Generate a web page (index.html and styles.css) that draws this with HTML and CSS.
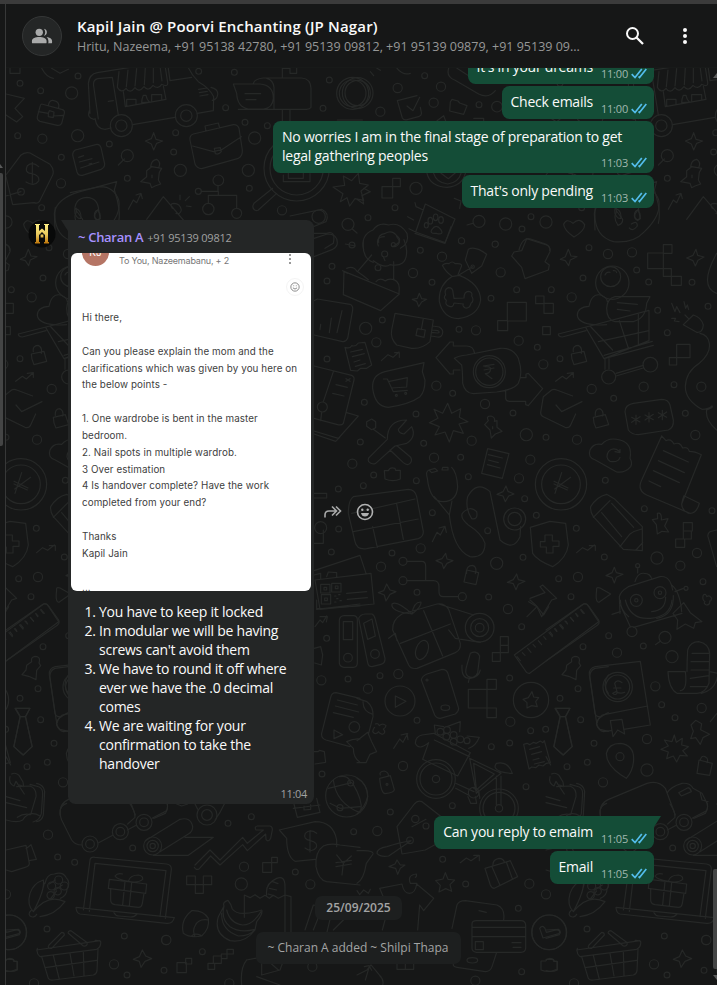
FILE: index.html
```html
<!DOCTYPE html>
<html lang="en">
<head>
<meta charset="utf-8">
<title>Kapil Jain @ Poorvi Enchanting (JP Nagar)</title>
<link rel="stylesheet" href="styles.css">
</head>
<body>
<svg class="defs" width="0" height="0" aria-hidden="true">
  <symbol id="ticks" viewBox="0 0 16 11"><path d="M.7 6.200 4 9.500 10.800 1M7.500 8.500 8.500 9.500 15.300 1" fill="none" stroke="#53bdeb" stroke-width="1.700"/></symbol>
</svg>
<div class="app">
  <aside class="rail"><i class="rail-arrow"></i><i class="rail-thumb"></i></aside>
  <main class="panel">
    <header class="header">
      <div class="group-avatar">
        <svg width="22" height="22" viewBox="0 0 24 24" fill="#a9aaaa"><circle cx="9" cy="8" r="4"/><path d="M1 19v-1.600c0-3 4-4.400 8-4.400s8 1.400 8 4.400V19q0 1-1 1H2q-1 0-1-1zM14.200 4.100a4 4 0 0 1 0 7.800q2.600-3.900 0-7.800zM17 13.200c3.500.5 6 1.800 6 4.200V19q0 1-1 1h-3.500q.5-.5.500-1v-1.600q0-2.600-2-4.200z"/></svg>
      </div>
      <div class="heading">
        <h1 class="title">Kapil Jain @ Poorvi Enchanting (JP Nagar)</h1>
        <p class="members">Hritu, Nazeema, +91 95138 42780, +91 95139 09812, +91 95139 09879, +91 95139 09...</p>
      </div>
      <div class="tools">
        <svg width="24" height="24" viewBox="0 0 24 24" fill="none" stroke="#fafafa" stroke-width="2"><circle cx="9.500" cy="9.500" r="5.500"/><path d="m13.500 13.500 6.500 6.500" stroke-width="2.300"/></svg>
        <svg width="24" height="24" viewBox="0 0 24 24" fill="#fafafa"><circle cx="12" cy="6" r="2"/><circle cx="12" cy="12" r="2"/><circle cx="12" cy="18" r="2"/></svg>
      </div>
    </header>
    <section class="chat">
      <svg class="wallpaper" width="711" height="917" viewBox="6 68 711 917" aria-hidden="true">
        <defs>
          <g id="doodles" transform="scale(.33333)">
            <defs>
              <g id="small">
                <path d="M60 250h0M122 272h0M234 228h0M596 214h0M703 217h0M677 323h0M988 240h0M969 325h0M53 407h0M328 432h0M527 398h0M521 456h0M184 472h0M382 535h0M125 623h0M748 565h0M735 367h0M802 377h0"/>
                <path transform="translate(1071)" d="M203 227h0M366 314h0M33 653h0M114 623h0M495 687h0M522 650h0M313 722h0M414 733h0"/>
                <path transform="translate(900 690)" d="M156 45h0M361 61h0M485 33h0M586 42h0M96 109h0M81 153h0M234 113h0M396 157h0M573 205h0M650 179h0M754 179h0M849 144h0M867 53h0M247 270h0M477 298h0M712 352h0M81 387h0M193 517h0M458 490h0M348 552h0M639 549h0M738 622h0M780 386h0M941 505h0M1010 120h0M1046 156h0M1176 157h0M1073 241h0M1102 308h0M1224 229h0M1122 464h0M1156 550h0M916 751h0M1033 836h0M181 636h0M371 640h0M482 682h0M221 735h0M190 767h0M115 777h0M349 752h0M505 740h0M674 806h0M397 848h0M563 902h0M709 856h0M669 982h0M829 895h0M913 981h0M116 897h0M94 966h0M276 969h0M351 1087h0M566 1101h0M776 1046h0M813 1100h0M1236 842h0M1209 1055h0"/>
                <path transform="translate(0 1800)" d="M129 140h0M60 295h0M114 266h0M122 359h0M162 430h0M142 487h0M81 500h0M980 115h0M1044 237h0M966 522h0M684 670h0M754 650h0M398 744h0M173 771h0M224 787h0M141 987h0M373 1008h0M492 1111h0M607 1055h0M886 816h0M1061 695h0M381 1125h0"/>
                <path transform="translate(1071 1800)" d="M494 80h0M755 107h0M859 138h0M69 227h0M458 234h0M180 361h0M521 392h0M566 388h0M458 429h0M403 440h0M507 560h0M286 617h0M100 636h0M954 353h0M914 314h0M257 778h0M326 852h0M484 925h0M494 1115h0"/>
              </g>
              <g id="medium">
                <path d="M127 416h0M183 550h0M846 631h0"/>
                <path transform="translate(1071)" d="M122 264h0M252 260h0M230 308h0M70 335h0"/>
                <path transform="translate(900 690)" d="M339 129h0M426 80h0M602 127h0M815 202h0M924 72h0M996 67h0M528 301h0M656 332h0M730 403h0M229 337h0M409 467h0M555 522h0M515 632h0M402 683h0M657 745h0M831 629h0M875 477h0M1031 470h0M1204 470h0M1186 615h0M691 689h0M157 701h0M362 955h0M243 1010h0M834 1041h0M1141 1007h0M1191 969h0"/>
                <path transform="translate(0 1800)" d="M189 547h0M144 704h0M499 1020h0M342 1093h0M732 800h0M931 853h0M964 241h0M937 1100h0M688 1150h0M102 1150h0"/>
                <path transform="translate(1071 1800)" d="M453 27h0M124 222h0M33 266h0M780 158h0M895 259h0M460 365h0M870 417h0M1034 324h0M138 498h0M61 693h0M517 851h0M567 883h0M355 1142h0M1047 1020h0"/>
              </g>
              <g id="large">
                <path d="M215 279h0M233 407h0M541 511h0M745 511h0M764 414h0M1248 565h0M1638 666h0M1517 672h0M1097 985h0M1579 1304h0M1490 1690h0M1971 1674h0M724 2652h0M2016 1970h0M1941 2310h0"/>
              </g>
            </defs>
            <use href="#small" class="ring r-small"/><use href="#small" class="core c-small"/>
            <use href="#medium" class="ring r-medium"/><use href="#medium" class="core c-medium"/>
            <use href="#large" class="ring r-large"/><use href="#large" class="core c-large"/>

            <!-- van, mailbox, briefcases, tag, magnifier -->
            <g class="line">
              <path d="M270 340 265 250Q268 222 292 218L560 175M285 355Q290 388 315 388L333 384M398 374 525 352M592 340 640 332 641 290Q630 265 595 245 575 225 565 203M505 205 510 242 575 232M355 345 337 232 293 236Q278 240 281 258L295 357M268 332q-8 22 14 26M633 262q22 5 20 22-2 15-16 17M325 304l15-2M596 268l25-4M598 278l24-4M600 288l24-4M370 275 376 320 498 298 490 258M380 318v-20h28v16M425 308q0-10 5-22h8q2 12 10 20zM455 302v-18h30v14"/>
              <circle cx="364" cy="377" r="33"/><circle cx="364" cy="377" r="17"/><circle cx="559" cy="347" r="33"/><circle cx="559" cy="347" r="17"/>
              <path d="M357 215 352 262q12 20 26 3 12 18 27-2 12 16 27-3 13 16 27-4 15 14 26-3 20 10 18-6L495 196M384 210l-5 50M410 206l-5 52M436 202l-3 52M460 198v50M480 198l6 45"/>
              <path d="M700 252H780Q820 255 820 295 818 325 790 327H745Q712 322 710 280ZM760 250Q765 236 790 234H905Q932 236 933 265V322Q930 328 920 328H715M735 281h47M738 299h30M822 328V262Q820 240 800 235M847 328V390M870 328V390M847 234V205H870V220H890V205"/>
              <circle cx="1058" cy="280" r="48"/><circle cx="1058" cy="280" r="40"/>
              <path d="M18 282 73 295 45 325 68 350 50 366 18 345M30 205V220H60V205M125 205q15 28 35 30M155 205l25 15 25-12"/>
              <path d="M125 312 185 328Q195 330 193 340L185 370Q180 378 172 376L120 364Q110 360 112 350L120 320Q122 312 125 312M145 316q3-18 17-14 18 4 14 22M115 335l30 5 3-8 14 4-1 12 28-2M145 340v10l15 3v-6"/>
              <path d="M580 402 700 374Q712 373 717 385L727 450Q728 468 715 475L605 506Q590 505 585 492L570 420Q568 406 580 402M618 393l-3-15 40-9 4 15M578 438 640 455 667 448 724 410M643 445l18-2 3 12q-8 10-18 6z"/>
              <path d="M226 450 290 433Q300 432 303 443L314 492Q314 503 303 508L247 526Q235 528 231 516L218 465Q218 454 226 450M236 472l15-5M238 486l38-10M242 504l55-18M267 492l8-2"/>
              <path d="M90 459 150 493Q164 508 158 525L118 605Q112 612 102 608L38 614 18 530M18 525 62 466Q75 455 90 459M63 575 18 588M116 500q-18-16-34-3-10 22 14 24 24 5 20 22-12 18-38 3M97 487v62M461 398l7 20 20 5-18 7-9 20-7-18-18-9 18-7zM355 495l18-18"/><circle cx="382" cy="467" r="18"/><circle cx="63" cy="575" r="10"/>
              <path d="M455 500 485 505 478 517 475 540 482 552 465 558 455 563 450 550 422 545 440 530V512zM452 500q2-20 18-22 14 8 6 26M456 525v8M385 628l15-28 10 8 12-25M408 585l15-5 4 16"/>
              <path d="M350 545 240 575Q170 595 163 640L165 690M350 545 343 570Q365 635 355 670M225 640q-5-45 35-48 35 2 36 40l5 24q-14 8-18-8 0-20 14-16M225 625q20 5 18 30-12 2-18-15M440 658 490 590 550 660M517 625q-10-14 5-15 18 0 22 20-3 15-16 10M540 585v14M568 590l-12 12M573 620l-14-2"/>
              <circle cx="655" cy="541" r="16"/><circle cx="625" cy="627" r="17"/><circle cx="710" cy="640" r="15"/><circle cx="595" cy="574" r="9"/>
              <path d="M604 574h50v-17M655 574v12H625v24M655 586H710v38M762 610 818 565M775 630 830 580M762 610q-8 12 2 20 8 4 14-2"/>
              <circle cx="890" cy="505" r="98"/><circle cx="890" cy="505" r="80"/><path d="M850 525v20h80v-24M865 520v15h45v-15M1012 360h75M1021 605l8-24-30-20 35-5-4-28 25 14 20-22 4 30 26 5-22 18 8 28-26-5-16 22-8-25z"/>
              <path d="M870 648 965 628Q990 640 978 665L915 690M850 700h130q28-10 20 30L975 745"/><circle cx="956" cy="650" r="20"/><circle cx="1044" cy="673" r="18"/><path d="m1057 687 14 12M1036 732l30 6"/>
            </g>

            <!-- upper right: check note, folder, paw card, heart, headset -->
            <g class="line" transform="translate(1071)">
              <path d="M275 205q-8 25 18 35L365 282q30 15 50-10M300 205l70 45q30-10 22-35M40 215l10 12M60 205l10 6M120 205q18 22 40 15M121 302 180 287M121 302l15 52q5 8 15 5l36-10q8-4 6-12l-3-15M150 318l18 14 20-40M280 306l5-8 18 5 5 6 22 8-10 26-42-10z"/><circle cx="2" cy="279" r="38"/><circle cx="2" cy="279" r="46"/>
              <circle cx="420" cy="320" r="16"/><path d="M350 355h30v10M240 362l20-15 6 16"/>
              <path d="M210 520q10 40 60 42 45-4 55-42M230 520q8 28 42 32 32-4 40-32M252 520l22 16 24-20M75 560h32v34H75zM107 535h23v25h-23zM20 565l20 10-25 12 5 25-20-14"/>
              <path d="M205 612 294 657 264 728 176 696zM176 696l-20-10M199 630l-22-10-3-12M152 650l18 10"/><ellipse cx="220" cy="662" rx="7" ry="10"/><ellipse cx="236" cy="652" rx="7" ry="10"/><ellipse cx="252" cy="660" rx="7" ry="10"/><ellipse cx="208" cy="676" rx="6" ry="8"/><path d="M225 688q12-18 26 0 12 18-13 12-22 2-13-12"/>
              <circle cx="366" cy="664" r="18"/><path d="m330 675 17-5M651 711q-30-20-31-38 8-20 28-3 20-20 35 4 0 18-32 37M292 595l20 8-4 22M486 750q10-40 35-33l45 15q15 8 12 20M715 622q-10 85 55 103 60 5 90-28Q915 645 905 600 890 560 850 560L760 578M778 624v12q-10 20 5 40 15-5 14-18l-16-22M842 630q16 20 0 32-18-10 0-32M823 672q18-12 18 6-14 18-24 6"/>
              <path d="M20 750Q10 705 48 690 65 665 95 675 128 665 150 700 158 730 130 745M65 728q-5-25 20-28 20-12 35 8 20 15-10 30"/>
            </g>

            <!-- middle field -->
            <g class="line" transform="translate(900 690)">
              <path d="M42 25 82 12Q112 12 112 38 112 50 98 58L42 80M190 35q-5 50 30 62M220 92q35 25 50 12 50 10 50-40 0-15-8-35M250 80l5 12M345 10l90 30 18-50M235 48q-10-28 18-28M290 20q18 20-5 30"/>
              <circle cx="254" cy="72" r="9"/><circle cx="280" cy="44" r="6"/>
              <path d="M132 124 130 194 242 242 298 192zM128 122l14 8M140 115q20-8 30 8l20 14 15 12M228 155q12-14 28-2 8-8 26-4 20 8 15 40M175 122 215 75M281 95v55"/>
              <path d="M358 190 365 206 380 208 365 216 356 230 350 214 337 208 352 205zM805 58l8 20 18 2-20 10-5 17-10-15-15-4 15-8zM1188 58l5 18 19 5-18 10-8 17-7-16-19-8 19-8z"/>
              <path d="M52 207 150 223Q160 228 158 240L143 325Q138 336 128 335L42 315M42 212l10-5M62 283l-2 16M94 264 88 308M126 242l-15 66"/>
              <path d="M285 250 400 270 390 335Q365 358 335 355L290 345Q270 325 275 300ZM398 288l20 3q12 8 10 18-2 14-16 12l-18-3M396 300l18 2q8 6-2 7l-18-2M370 265l-6 34M352 296l24 4-4 22-24-6z"/>
              <path d="M455 140Q415 165 418 215 430 265 475 266 535 258 542 210 540 160 478 136ZM455 138q-18-12-28-32 8-8 20-5 10-10 18 0 20-2 20 6-6 14-12 30M478 134 518 110M496 90 505 58q20-12 55 15l-15 35-30 22Z"/>
              <circle cx="518" cy="110" r="5"/>
              <path d="M462 205 492 204q0-20 14-20 13 2 9 14 9 14-2 22-4 16-17 14-10-6-6-12l-28-3q-2 14-14 10-14-3-9-18-11-8-2-16-6-16 8-22 14 0 14 14z"/>
              <path d="M680 26 740 45Q752 50 750 65L735 95 748 105 745 120 675 146 665 112 635 78 642 66 665 62zM622 217h57v56h-57zM593 272h30v30h-30zM707 198h25v23h-25zM732 220h28v30h-28zM728 290h23v24h-23zM1043 69h47v47h-47zM1090 44h26v26h-26zM1090 116h24v23h-24zM1114 139h30v27h-30zM1130 343h40v40h-40zM1108 383h22v22h-22z"/>
              <path d="M135 352q15 5 20-5 12 4 20-8l20-2 20 68-15 10-18 0-10 8-20-2zM152 366l35-8M157 380l36-9M162 396l18-6M166 409l30-8M244 392l20-18 15 8 18-16M284 368h14v14"/>
              <path d="M372 398 255 425Q215 435 218 475 225 530 265 532 330 522 360 500 375 485 375 450L367 425ZM250 447h12l18 38 42-4M265 455l57-12-2 28-45 3"/><circle cx="289" cy="496" r="3"/><circle cx="317" cy="490" r="3"/>
              <path d="M523 368Q520 348 500 348H460V336H450L408 383 450 432H460V420H480M463 385Q475 378 500 375L600 355Q640 352 655 385 670 430 655 460 640 480 590 486L520 491Q495 490 488 460 488 425 485 405ZM617 480V505Q618 514 630 514H677V524L685 527 728 476 685 430 678 432V443H662"/>
              <circle cx="568" cy="425" r="48"/><circle cx="568" cy="425" r="41"/><path d="M550 408l32-5M552 420l30-6M555 410q18-2 17 8-2 12-16 13l20 15"/>
              <path d="M42 408 155 436Q164 440 162 450L130 580Q125 588 110 583L42 565M100 425 70 515M65 547l-3 25M42 603 115 625 175 558 140 548M42 612l65 22 12-12M108 464l34 8M98 490l34 8M138 446l12 8M150 446l-12 8"/><circle cx="67" cy="531" r="15"/>
              <path d="M443 520 455 550 482 536 478 562 504 575 477 582 490 610 460 602 448 636 435 606 405 615 418 590 388 578 414 565 402 538 428 550z"/>
              <path d="M200 575l15-8 12 8v18l-12 6-15-10zM220 598 256 624M210 680 262 628Q262 570 320 570L295 598Q295 610 312 612L335 590Q350 620 320 640L285 648 227 700Q215 705 206 695 202 685 210 680M270 660l40 38q12 10 20 2 8-8 2-18L292 648"/>
              <path d="M565 572q-8-14 8-14 14 4 10 16l8-2v20l15 12-20 8-12 12-4-24-16-16zM578 590v6M730 500 755 480Q762 476 770 480L818 498M768 525 785 545 846 515M730 500 722 548Q722 556 730 560L795 592Q808 595 812 585L827 552M820 365q-3-18 14-19 14 6 10 24M814 372l38-8 8 30-38 10q-8-16-8-32M886 556q-2-20 14-20 12 6 8 22M880 562l36-8 10 30-38 10q-8-14-8-32M767 454l20-15 12 8 20-18M802 430l18-2v14"/>
              <circle cx="937" cy="158" r="50"/><circle cx="932" cy="140" r="30"/><path d="M915 135q5-10 15-8M940 122q8-2 10 6M920 284q-20 2-40 0-45-5-48-28 0-25 35-27 8-40 35-34 20 8 20 20M1050 200H945Q922 205 920 235 920 270 945 275H1000Q1038 265 1040 220ZM952 218l60 5M952 238l38 5"/>
              <path d="M775 312 870 288 1047 241V332L912 386 858 294M775 312q0 8 12 9L858 302M870 288l68 72M912 386l148-40M912 376l145-42M895 335 1047 302M958 272l28 85M1015 250v96M915 386v32M927 386v30M948 430l82-24M948 438l82-24"/><circle cx="926" cy="441" r="21"/><circle cx="1051" cy="404" r="22"/>
              <path d="M1115 220l10 25 5-15 10 18M1152 215l5 20 5-10 4 14M1115 265h12l-4 8 14 2M1150 284l30-29q25 8 30 30-2 24-20 22zM1155 255l10 10M1200 310q25 5 28 30 5 30-30 60-40 25-42 70 0 40 50 68 20 0 30-10 5 5-16 12Q1215 570 1250 600M1250 70Q1195 170 1250 190"/>
              <path d="M1000 520 1085 508Q1105 508 1110 525L1120 570Q1122 592 1105 600L1015 614Q995 614 985 600L975 545Q975 525 1000 520M1008 555v28M995 562l25 14M1020 560l-25 17M1047 548v28M1035 555l25 14M1060 553l-25 17M1087 541v28M1075 548l25 14M1100 546l-25 17"/>
              <path d="M886 690Q862 682 870 660 880 638 905 643 925 620 960 630 998 640 990 685 998 700 992 710 975 730 950 726ZM958 664q-18-14-32 0-12 18 4 30 24 5 30-12M945 665l15 3v-10"/>
              <path d="M1085 618 1098 632q14-8 24 10 18-8 26 12 16-5 20 10 16 0 36 10L1145 822M1085 618 1025 750Q1010 780 1040 795L1170 850Q1190 850 1198 820L1152 797Q1148 805 1145 822 1145 840 1165 850M1090 662l75 34M1075 692l78 36M1060 722l78 36M1047 753l35 17"/>
              <circle cx="783" cy="763" r="77"/><circle cx="783" cy="763" r="58"/><path d="m765 790 20-62M762 762l40 18M762 754l42 20M812 742l-48 35"/>
              <path d="M563 656l64 15-20 74-62-15zM565 674l42 10M565 690l30 8M562 704l38 10M618 768l6 16 18 8-16 6-10 17-7-17-18-5 18-8z"/>
              <path d="M253 722h12q5-12 20-7l2 6h14v26q-22 10-46 0zM160 800 325 778Q345 778 350 800L370 905Q370 920 355 926L200 956Q170 960 165 935L145 850Q145 810 160 800M155 850l190-43M160 905l195-38M218 890l14 62M290 822l20 106"/>
              <path d="M390 720Q375 720 382 745 390 815 430 815 470 815 473 770 470 725 455 712M387 720l18-5 8 8-18 5zM428 712h16v8h-18zM403 800l45 55 8-42M448 855Q460 960 510 980 555 985 555 940 545 910 505 885 480 865 487 850 510 825 530 845 535 870 515 866 495 835 503 800 530 750 570 785 595 905 600 930 640 965 660 920L662 890"/><circle cx="644" cy="867" r="33"/><circle cx="644" cy="867" r="20"/>
              <path d="M750 874 797 880 805 945Q800 985 758 1010 710 990 698 970L691 892ZM735 915h22v18h20v16h-18v20h-20v-18h-18v-16h14zM830 968l18-15 15 8 20-16M868 947h18v14M397 935l14-28 10 8 14-26M417 894l18-5 4 18"/>
              <path d="M872 830Q890 800 920 793L945 808 1027 890V962L970 958 880 860Q870 845 872 830M880 862 930 812M905 848l60 72M935 820l66 72M960 950l30-38q14-10 35-15M1008 960l20-22M1072 850q14-4 12 20l20-4-10 22 12 18-20-2-14 8-3-28-12-15 16-3zM1150 878h27v25h-27zM1150 903h24v24h-24zM1127 927h27v25h-27z"/>
              <path d="M42 790h38v14H42M42 940H70V900"/><circle cx="62" cy="893" r="18"/>
              <path d="M42 1022 180 976 198 1030M45 1050 213 1030 222 1122 60 1138zM62 1063h28v26H62zM95 1060h28v26H95zM64 1094h28v28H64zM72 1072h8v8h-8zM106 1068h8v8h-8zM74 1104h8v8h-8zM104 1098h4M116 1094h4M110 1106h4M104 1116h4M120 1112h4M140 1090l60-5M142 1108l60-5M42 1035l20-5v16M80 1040l5-14 25 2v14M260 1062l10 18 18 5-18 8-12 20-5-18-18-7 16-6zM437 970l4 17 18 5-18 8-10 16-5-16-18-8 18-6zM650 1032l5 17 20 5-20 9-7 16-8-18-18-4 18-8zM943 1012l6 16 20 5-20 9-6 17-7-17-18-5 18-9z"/>
              <circle cx="309" cy="994" r="12"/><circle cx="309" cy="1052" r="12"/><circle cx="487" cy="1100" r="12"/><path d="M321 994H365Q377 994 377 1008V1052M321 1052H400Q417 1052 417 1070V1085Q417 1100 430 1100H475M500 1030q-2-24 18-24 14 5 8 25M500 1020l36 8-8 36-36-8zM890 1080q-2-10 10-6l32 18-35 25q-12 0-7-37"/>
              <path d="M690 1105 735 1088 720 1070 728 1065 770 1105 755 1110 725 1160 710 1128 690 1110M1005 1055q8-28 28-25 18 0 23 18M1013 1015v14M960 1150 958 1100Q960 1085 985 1070L1080 1040Q1110 1035 1118 1080M1115 1065q25 20 30 80M1125 1085l25-10M1250 900l-20 5q-8 5-6 15l26 90"/><circle cx="1013" cy="1007" r="6"/><circle cx="1158" cy="1075" r="6"/><circle cx="1009" cy="1111" r="18"/><circle cx="1080" cy="1088" r="18"/><circle cx="1009" cy="1111" r="5"/><circle cx="1080" cy="1088" r="5"/>
              <path d="M1055 1145q42-4 42-44M1070 1165q52-10 50-68M1210 1095q8-5 10 5 10-6 15 5-2 10-6 8 2 12-10 12-10-5-4-10-10-6-5-20"/>
            </g>

            <!-- lower left: tie, notes, laptop, corn, basket, bananas -->
            <g class="line" transform="translate(0 1800)">
              <path d="M18 90 130 12Q140 8 146 18L176 60Q180 70 172 76L18 183M30 96l8 10M46 86l5 8M62 74l8 10M78 64l5 8M92 53l8 10M108 42l5 8M122 30l8 10M95 185q-3-14 10-16 18 0 12 20l5 8-12 14-2 28-22-10-20-5 12-14 2-14z"/>
              <path d="M205 200 165 205Q148 212 150 232L165 340Q168 352 185 350M205 225q-20 30 0 55M205 338q-55 25-25 50l25 6M45 325h45L76 350 97 440 70 465 42 440 60 350zM60 350h16M18 470l14 25"/>
              <path d="M35 522q10-6 22 4l12 20 2 14-12-5M30 530q-5 20 12 28M42 558l6-14 25 38M18 590l42 12M18 608l62 15M18 660q35 10 50 0 20-30 52-12M52 652q20-14 40-8L108 590Q110 565 90 558L50 560M90 553l28 8q10 5 10 20l-4 60q-5 20-25 25M110 550q22 5 24 25l-4 70q-4 18-20 20"/>
              <path d="M200 610Q170 620 185 660L215 720Q225 735 246 735M296 728 338 706M382 690 410 675M456 655 495 635Q505 630 502 610M390 612q15 20 15 40l-22 20M530 612l15 6 18-6M645 660q15-20 28-48M585 612l8 16"/>
              <circle cx="270" cy="732" r="24"/><circle cx="270" cy="732" r="13"/><circle cx="361" cy="695" r="24"/><circle cx="361" cy="695" r="13"/><circle cx="432" cy="667" r="24"/><circle cx="432" cy="667" r="13"/><circle cx="621" cy="645" r="30"/><circle cx="621" cy="645" r="16"/>
              <circle cx="458" cy="738" r="27"/><circle cx="458" cy="738" r="17"/><circle cx="458" cy="738" r="8"/><path d="M436 722 540 658Q572 650 578 680 578 695 565 702L480 755M460 766H565L640 712H555"/>
              <path d="M585 795 630 750 660 780 728 712 742 730 790 690 768 690Q762 680 772 678L810 678Q818 680 817 690L812 715Q805 728 798 718L797 702 742 752 728 734 660 795 632 768 598 806Q588 812 583 802"/>
              <path d="M838 690 945 665Q1000 665 1010 720V740M838 690 860 715Q860 770 885 784L945 778M950 700q-20-14-34 0-8 18 15 22 24 6 18 20-12 18-34 2M930 692v64M970 738Q990 728 1020 735L1080 742M970 738Q945 755 948 800 955 840 980 845L1080 855M1010 765l20 25 24-22M1008 800l46-8M1030 790l-4 35M1008 788l46-7M882 612l10 40 68-15-10-42M880 625l80-10M912 618v12l20-2v-14"/>
              <circle cx="1040" cy="588" r="63"/><path d="M1000 540q8 70 80 98M1018 530q30-5 34 20M1058 550q30 50 25 80M990 610l30 15 60-5M985 565l70-17"/><circle cx="1052" cy="549" r="9"/><circle cx="1020" cy="623" r="9"/>
              <path d="M950 0V26L1080 18M950 28 1080 12M945 80l15-20 8 8 12-20M960 50h22l-3 16M1018 60q2-12 14-13l30 0q10 2 10 12v130q0 12-12 13h-28q-12-2-14-12zM1030 65h28v54h-28zM942 145l20-5 6 25-4 30-20-6"/><circle cx="1044" cy="173" r="13"/>
              <path d="M1080 295 1008 278Q995 278 992 292L965 400Q963 415 978 420L1050 440M1012 300l60 15M1006 318l70 18M1000 338l60 14M1002 390v26l26-12zM1040 425q20-10 40-8M1040 425l20 20q0 30 20 42M942 455h12l5-4 14 4 4 32-32 5"/><circle cx="1063" cy="381" r="16"/>
              <path d="M18 750 78 736 88 790Q88 800 75 802L35 815 18 810M78 746l15-12 16 44-22 4M250 930 270 780Q272 770 285 772L500 792Q515 795 514 808L496 955M268 934 285 790 498 812 480 950M228 924Q230 940 240 942L500 970Q518 972 523 953L228 922M342 938q5 10 15 10l35 3q12 0 18-8"/>
              <path d="M328 838 440 852 437 880 325 865zM332 866V900Q332 912 345 914L415 922Q425 922 427 910L432 880M375 845 368 914M395 848 388 918M385 844Q350 838 345 828 352 818 368 822M385 844Q390 825 415 825 430 828 428 838 415 850 385 844"/>
              <path d="M100 935Q80 915 90 880 100 850 130 840 135 870 100 935M100 935Q145 880 195 905 165 945 120 950M95 930q-12 10-5 18 12 8 20-5M135 850q5-28 28-28 25-8 35 10 15 15 3 35 0 20-20 28M125 880l8-30M148 852l18-12M165 870l22-15M150 898l20-25"/><circle cx="155" cy="858" r="12"/><circle cx="176" cy="840" r="12"/><circle cx="193" cy="858" r="12"/><circle cx="173" cy="874" r="11"/><circle cx="152" cy="886" r="11"/>
              <circle cx="28" cy="997" r="52"/><path d="M18 990 55 988Q65 995 58 1004L18 1015M18 1078h22l4 6h8v26q-16 8-34 2M560 828h26v26h-26zM610 828h25v26h-25zM586 854h24v26h-24zM788 788h27v29h-27zM815 772h17v16h-17zM531 1088h28v30h-28zM557 1075h18v17h-18zM624 1090h20v18h-20zM640 1068h24v22h-24zM664 1062h17v14h-17zM681 1048h19v14h-19zM427 1050l10 18 18 8-20 8-12 18-5-18-18-6 18-8z"/>
              <path d="M575 932Q610 930 625 955 630 985 605 1008 570 1015 550 1000 540 960 575 932M625 960q-30-5-40 18-8 12 0 32M575 1008q8-10 28-2"/>
              <path d="M672 918q-5-12 12-17l8 12 5 14Q715 952 785 930 790 940 770 965L765 990Q735 1030 690 1022 640 1000 655 950ZM672 918q-10 40 18 62 30 20 75 8M680 930q10 40 48 45 30 0 55-40M665 940q-2 50 50 68 35 0 50-20"/>
              <path d="M733 952V885L750 893 765 884 780 895 795 886 808 895 820 886 835 895 855 885 873 890V1000M733 952M800 885Q795 850 830 835 855 825 855 860V1000M805 882l20 6M808 865l22 5M818 845l16 6M740 1080q-20 25-15 75M740 1080l50-10 45 40M770 1130l70 25M785 1075v50l55-15 8-22"/>
              <path d="M110 1050 300 1022M112 1045Q108 1060 120 1070L290 1048Q304 1040 302 1025 298 1020 285 1021M155 1045q-15 2-8-10L185 997q8 0 8 8zM205 1000q-2-8 8-8L262 1028q0 12-12 10zM125 1070 145 1135Q150 1142 160 1140L280 1125Q290 1122 291 1112L294 1048M135 1103l155-22M160 1066l18 72M210 1060l12 68M250 1053l2 74M915 990l25-75 35 5M940 990l22-55 40 10M980 1000l12-50 40 8M1000 990l60-60"/>
            </g>

            <!-- lower right: gifts, bicycle, book, robot, card, basket -->
            <g class="line" transform="translate(1071 1800)">
              <path d="M5 55Q10 43 25 42L45 42Q52 45 55 58L84 175Q85 190 72 193L45 200Q34 200 32 188zM20 70 45 57 55 108 32 118z"/><circle cx="54" cy="162" r="13"/>
              <path d="M135 42 240 12Q262 8 275 28L310 130Q312 150 295 158L180 205Q162 208 155 195L107 90Q105 60 135 42M130 130 280 72M200 32 257 168M165 42Q100 35 105 12 120 0 165 42M165 42Q170 5 192 6 195 20 165 42M245 12 350 45M275 90 295 115 370 127M95 115l20-15 5 22"/><ellipse cx="195" cy="150" rx="18" ry="30" transform="rotate(20 195 150)"/><circle cx="368" cy="83" r="43"/><circle cx="368" cy="83" r="27"/><circle cx="368" cy="83" r="13"/>
              <path d="M340 160q20-10 28 8l-6 50q-10 22-30 10-10-8-3-30zM315 195q-3 42 25 40 25-3 30-25M337 235l-3 12M430 110h24v26h-24zM430 136h24v22h-24zM406 158h24v26h-24zM334 268h56v56h-56zM390 238h28v30h-28zM390 324h28v29h-28z"/>
              <circle cx="129" cy="303" r="45"/><path d="M115 288v34l32-18zM193 240Q195 228 210 222L255 208Q268 208 272 218L305 325Q305 335 295 342L250 355Q238 355 233 345ZM0 295l30 10Q50 320 48 350L35 400M18 305q0 30 30 38M0 422l32-25 12 28 15 30-20 8-12 25H0M55 372q8-4 12 5 10-10 20 0-2 8-8 10 10 12-4 16-10-5-10-8-10 12-18 0 3-12 6-13M110 445l18-28 10 10 14-26M132 405l18-4 3 18"/><circle cx="210" cy="240" r="3"/><ellipse cx="265" cy="323" rx="13" ry="8"/>
              <path d="M175 430q0-20 20-25l35-5 110 58-38 70-105-50 18-50q-30 25-40 2M232 420l105 50M235 400 232 375 260 380M270 380 310 365 308 395M330 408 367 412Q355 440 335 445"/><circle cx="250" cy="395" r="10"/><circle cx="270" cy="390" r="10"/><circle cx="268" cy="410" r="10"/><circle cx="290" cy="405" r="10"/><circle cx="290" cy="425" r="10"/><circle cx="310" cy="418" r="10"/><circle cx="330" cy="422" r="9"/>
              <circle cx="237" cy="537" r="58"/><circle cx="237" cy="537" r="48"/><circle cx="237" cy="537" r="11"/><circle cx="426" cy="625" r="58"/><circle cx="426" cy="625" r="48"/><circle cx="426" cy="625" r="11"/><path d="M338 475 432 520 358 580 338 475M350 490l8 78M350 490l62 32-54 48M296 550l55 25M296 565l38 20M418 528V614M432 528V614M418 490q35-8 48 30-20 0-35-5-25-10-13-25M333 590l8 20h18l-4-20M350 565q20 10 18 30"/><circle cx="350" cy="578" r="16"/>
              <path d="M472 165 680 12Q690 10 695 20L725 65 518 220Q510 222 505 212ZM480 170l10 12M496 158l8 8M512 145l10 12M528 133l7 8M544 122l10 12M560 110l7 8M576 98l10 12M592 86l7 8M608 75l10 12M624 63l7 8M640 52l10 12M656 40l7 8M672 28l10 12"/>
              <path d="M510 50 540 20 515 5M540 20 560 45 575 20M790 0q0 30 25 50M805 0q15 60 75 55 60-5 65-55M830 82l145-42M790 15 820 80M948 40 980 8 1000 38 1035 65 1015 68 1010 85 985 72 960 88 962 60zM765 43l25-8"/><circle cx="825" cy="95" r="15"/><circle cx="924" cy="112" r="18"/><path d="m895 134 16-11"/>
              <path d="M990 215Q990 185 992 150 1000 125 1025 125 1055 130 1058 160L1056 250Q1045 280 1020 280H960Q935 265 933 215H985Q992 270 970 272M1000 235l56-8M1005 160h50M1002 185h54M1002 210h54M1000 260h50M1058 215l25 5q-5 50-50 60"/>
              <circle cx="522" cy="300" r="53"/><path d="M525 275l5 16 15 2-9 12 5 15-17-3-14 7v-16l-12-10 16-5zM596 325h43L626 350 645 440 618 465 590 440 610 350zM610 350h16"/>
              <path d="M697 225Q695 205 715 200L850 184 880 375 800 388M697 225 720 375Q725 392 740 395L762 392M720 370Q725 345 745 343L872 318M760 362 795 358 803 402 782 390 768 410z"/><circle cx="782" cy="261" r="44"/><circle cx="782" cy="261" r="36"/><path d="M795 248q-14-12-22 2l8 28q-5 10-14 2l10-5q14 8 26 2M770 264h22M500 433l10-3 8 4 12-7 8 3 12-7 8 5 4-6 18 66-12 2-10 8-12-3-10 8-12-2-8 6zM518 448l30-8M524 463l30-8M528 480l18-5M532 492l30-7"/>
              <path d="M808 535Q748 500 748 460 755 430 790 430 830 435 830 475Q830 510 808 535"/><circle cx="789" cy="470" r="12"/><path d="M952 405l6 22 18-12-2 20 20 5-17 12 14 16-22-2-10 20-10-18-20 8 5-20-22-8 22-10-12-18 23 5zM1002 375l14-14 18 10-3 18 27 14-20 10-8 20-14-20-15 3 8-22zM1030 480q3-15 14-10 12 6 6 18M1026 480l40 10-8 36-38-6zM1080 340l-20 25"/>
              <path d="M70 525q-5-10 12-12 14 4 12 15M68 535l32-8 12 42q0 8-28 12-12-2-16-46M0 535Q30 550 32 590 25 620 0 642"/><circle cx="90" cy="553" r="3"/>
              <path d="M250 648 195 605Q182 600 172 612L120 680 135 762 205 750 250 725M162 722Q120 730 90 740 60 745 60 760 70 772 95 768ZM165 680l42-22"/><circle cx="175" cy="657" r="11"/><circle cx="207" cy="678" r="9"/><circle cx="159" cy="721" r="10"/>
              <path d="M730 648Q725 610 755 598L870 550Q905 540 925 565L955 645M930 580Q940 560 975 550 1000 548 1008 565L1035 580 1050 610Q1055 625 1045 640L1010 655M965 578l28-15q8 2 10 12l-30 13zM1030 580l5 20 18 5"/>
              <path d="M0 752h20q30 0 28 10L28 790Q20 840 0 850M0 872l8 12 12-14 14 10 6-12M310 788l18-14 14 8 22-15M350 766h17v16M384 805 460 782 482 830 412 865Q404 865 400 855ZM408 797q-2-18 18-22 14 0 16 12M405 800l24 56M448 786l18 50M120 780l10 15 14 0-14 10-8 18-6-18-20-5 18-8zM265 818l8 20 20 2-14 14 5 20-18-8-20 10 4-20-14-14 22-5z"/>
              <path d="M135 852 68 865 85 905M135 852q5 28 22 28 18 0 22-28L230 895 200 932 188 915 182 990M180 850 160 850Q150 825 178 822 180 830 175 832M92 930 76 990M285 985 300 915Q305 902 325 902L420 915Q445 925 440 960M366 932l22 5M290 1090Q285 1100 300 1102L385 1115Q400 1115 405 1100L418 1060M345 972Q345 962 358 962H492Q505 962 506 975V1045Q505 1056 492 1057H358Q345 1055 345 1045ZM345 982h160M345 1010h160M355 1025h24v24h-24zM465 1028h27M468 1042h24M120 1090h50v18H120zM145 1090v18M0 1125l30-15 12-15 25 30q15 15 10 30M25 1140l12-40M22 1100l14-3 8 14"/><ellipse cx="346" cy="1081" rx="16" ry="8"/>
              <circle cx="576" cy="997" r="52"/><path d="M548 985q8-12 16 0l4 12 32-8q12 4 6 12l-48 13zM552 1083h14q8-12 22-5l2 6h10v24q-24 12-48 2z"/>
            </g>
          </g>
        </defs>
        <use href="#doodles" x="-540"/><use href="#doodles"/><use href="#doodles" x="540"/>
      </svg>

      <div class="thread">
        <div class="bubble out"><span class="text">It's in your dreams</span><span class="meta">11:00<svg class="tick"><use href="#ticks"/></svg></span></div>
        <div class="bubble out"><span class="text">Check emails</span><span class="meta">11:00<svg class="tick"><use href="#ticks"/></svg></span></div>
        <div class="bubble out long"><span class="text">No worries I am in the final stage of preparation to get<br>legal gathering peoples</span><span class="meta">11:03<svg class="tick"><use href="#ticks"/></svg></span></div>
        <div class="bubble out"><span class="text">That's only pending</span><span class="meta">11:03<svg class="tick"><use href="#ticks"/></svg></span></div>

        <div class="incoming">
          <svg class="sender-logo" width="28" height="28" viewBox="0 0 28 28">
            <defs><linearGradient id="gold" x2="0" y2="1"><stop stop-color="#fff084"/><stop offset=".55" stop-color="#e9c85c"/><stop offset="1" stop-color="#bd7408"/></linearGradient></defs>
            <circle cx="14" cy="14" r="13.500" fill="#080909"/>
            <path fill="url(#gold)" d="M7 4h5v1h-1v6l3-2.500L17 11V5h-1V4h5v1h-1v17h1v1.500h-5V22h1v-7l-3-3-3 3v7h1v1.500H7V22h1V5H7zM12.600 14.600h2.800v2.800h-2.800z"/>
          </svg>
          <article class="bubble in">
            <div class="sender"><b class="name">~ Charan A</b><span class="phone">+91 95139 09812</span></div>
            <div class="mail">
              <div class="mail-top"><span class="initials">KJ</span><span class="to">To You, Nazeemabanu, + 2</span><span class="kebab"><i></i><i></i><i></i></span></div>
              <div class="react"><svg width="10" height="10" viewBox="0 0 12 12" fill="none" stroke="#777"><circle cx="6" cy="6" r="5"/><path d="M3.500 7q2.500 3 5 0M4 4.500h1M7 4.500h1"/></svg></div>
              <p class="mail-body">Hi there,<br><br>Can you please explain the mom and the<br>clarifications which was given by you here on<br>the below points -<br><br>1. One wardrobe is bent in the master<br>bedroom.<br>2. Nail spots in multiple wardrob.<br>3 Over estimation<br>4 Is handover complete? Have the work<br>completed from your end?<br><br>Thanks<br>Kapil Jain<br><br>...</p>
            </div>
            <ol class="answers">
              <li>You have to keep it locked</li>
              <li>In modular we will be having<br>screws can't avoid them</li>
              <li>We have to round it off where<br>ever we have the .0 decimal<br>comes</li>
              <li>We are waiting for your<br>confirmation to take the<br>handover</li>
            </ol>
            <time class="time">11:04</time>
          </article>
          <div class="actions">
            <svg width="20" height="20" viewBox="0 0 20 20" fill="none" stroke="#a8a9a9" stroke-width="1.600"><path d="M2 15.500v-2.500q0-4 4-4h7.500M9 4.500l4.500 4.500L9 13.500M13 4.500l4.500 4.500-4.500 4.500"/></svg>
            <svg width="20" height="20" viewBox="0 0 20 20"><circle cx="10" cy="10" r="7.500" fill="none" stroke="#b1b2b2" stroke-width="1.600"/><path d="M6 11h8q-.8 3.500-4 3.500T6 11z" fill="#b1b2b2"/><circle cx="7.300" cy="7.800" r="1.200" fill="#b1b2b2"/><circle cx="12.700" cy="7.800" r="1.200" fill="#b1b2b2"/></svg>
          </div>
        </div>

        <div class="bubble out tail"><span class="text">Can you reply to emaim</span><span class="meta">11:05<svg class="tick"><use href="#ticks"/></svg></span></div>
        <div class="bubble out"><span class="text">Email</span><span class="meta">11:05<svg class="tick"><use href="#ticks"/></svg></span></div>
        <div class="pill date">25/09/2025</div>
        <div class="pill notice">~ Charan A added ~ Shilpi Thapa</div>
      </div>
      <i class="scroll-up"></i><i class="scroll-thumb"></i><i class="scroll-down"></i>
    </section>
  </main>
</div>
</body>
</html>
```
FILE: styles.css
```css
* { box-sizing: border-box; }
body { margin: 0; background: #161717; color: #fafafa; font-family: "Open Sans", "Noto Sans", sans-serif; font-size: 14px; }
h1, p, ol { margin: 0; padding: 0; }
.defs { position: absolute; }
.app { display: flex; width: 717px; height: 985px; overflow: hidden; border-top: 4px solid #3b3b3b; }
.rail { width: 6px; flex: none; border-right: 1px solid #373838; display: flex; flex-direction: column; padding-top: 160px; }
.rail-arrow { border-bottom: 4px solid #5a5b5b; border-right: 3px solid transparent; width: 3px; }
.rail-thumb { width: 3px; height: 273px; margin-top: 5px; background: #444545; border-radius: 0 2px 2px 0; }
.panel { flex: 1; min-width: 0; display: flex; flex-direction: column; }
.header { height: 64px; flex: none; display: flex; align-items: center; padding: 0 20px 0 16px; border-bottom: 1px solid #181a19; }
.group-avatar { width: 40px; height: 40px; border-radius: 50%; background: #242626; border: 1px solid #353737; display: grid; place-items: center; }
.heading { margin-left: 15px; white-space: nowrap; flex: 1; min-width: 0; }
.title { font-size: 15px; line-height: 21px; font-weight: 650; letter-spacing: .16px; }
.members { font-size: 12.500px; line-height: 18px; color: #969797; margin-top: 1px; }
.tools { display: flex; gap: 26px; }
.chat { position: relative; flex: 1; min-height: 0; overflow: hidden; }
.wallpaper { position: absolute; inset: 0; }
.line, .ring { fill: none; stroke: #262827; stroke-width: 3.6; stroke-linecap: round; stroke-linejoin: round; }
.core { fill: none; stroke: #161717; stroke-linecap: round; }
.r-small { stroke-width: 21; } .c-small { stroke-width: 14; }
.r-medium { stroke-width: 31; } .c-medium { stroke-width: 24; }
.r-large { stroke-width: 40; } .c-large { stroke-width: 33; }
.thread { position: relative; display: flex; flex-direction: column; align-items: flex-end; gap: 2px; margin-top: -17px; padding-right: 63px; }
.bubble { border-radius: 7.500px; }
.out { position: relative; display: flex; align-items: flex-end; gap: 8px; height: 33px; padding: 6px 7px 8px 9px; background: #144d37; white-space: nowrap; }
.text { line-height: 19px; font-weight: 450; letter-spacing: -.24px; }
.long { height: 52px; width: 381px; justify-content: space-between; }
.long .text { width: 310px; }
.meta { display: flex; align-items: center; gap: 3px; height: 15px; margin-bottom: -5px; color: #a1b8af; font-size: 11px; letter-spacing: -.2px; }
.tick { width: 16px; height: 11px; }
.tail { border-top-right-radius: 0; }
.tail::after { content: ""; position: absolute; top: 0; left: 100%; width: 7px; height: 11px; background: #144d37; clip-path: polygon(0 0, 100% 0, 0 100%); }
.incoming { align-self: stretch; display: flex; margin: 10px 0; padding-left: 22px; align-items: center; }
.sender-logo { align-self: flex-start; margin-right: 12px; }
.in { position: relative; width: 246px; height: 584px; padding: 8px 3px; background: #242626; border-top-left-radius: 0; }
.in::before { content: ""; position: absolute; top: 0; right: 100%; width: 7px; height: 11px; background: #242626; clip-path: polygon(0 0, 100% 0, 100% 100%); }
.sender { height: 25px; line-height: 19px; padding-left: 7px; display: flex; gap: 4px; white-space: nowrap; }
.name { font-size: 13px; font-weight: 600; color: #a791ff; letter-spacing: -.3px; }
.phone { font-size: 11px; color: #a0a1a1; letter-spacing: -.2px; }
.mail { height: 338px; border-radius: 6px; overflow: hidden; background: #fff; color: #404040; font-family: Inter, sans-serif; padding: 0 11px; }
.mail-top { display: flex; height: 25px; }
.initials { width: 27px; height: 27px; margin-top: -14px; border-radius: 50%; background: #b57565; color: #fff; text-align: center; font: 10px/27px Inter, sans-serif; }
.to { margin-left: 10px; font-size: 9px; line-height: 15px; letter-spacing: -.2px; color: #777; white-space: nowrap; }
.kebab { margin-left: auto; width: 20px; display: flex; flex-direction: column; gap: 2px; padding: 1px 0 0 9px; }
.kebab i { width: 2px; height: 2px; background: #777; border-radius: 50%; }
.react { width: 18px; height: 18px; margin: 0 -4px 0 auto; border: 1px solid #f4f4f4; border-radius: 50%; display: grid; place-items: center; }
.mail-body { margin-top: 14px; font-size: 9.800px; line-height: 16.850px; letter-spacing: .1px; white-space: nowrap; }
.answers { margin-top: 11px; padding-left: 28px; line-height: 19px; white-space: nowrap; font-weight: 450; letter-spacing: -.24px; }
.time { position: absolute; right: 7px; bottom: 3px; font-size: 11px; line-height: 15px; color: #a0a1a1; letter-spacing: -.3px; }
.actions { display: flex; gap: 12px; margin-left: 9px; }
.pill { align-self: center; background: #1d1f1f; color: #a3a4a4; border-radius: 7px; white-space: nowrap; text-align: center; }
.date { width: 87px; height: 24px; margin: 10px 0 0 57px; font-size: 12px; font-weight: 650; line-height: 23px; }
.notice { width: 205px; height: 32px; margin: 10px 0 0 56px; font-size: 12px; line-height: 31px; }
.scroll-thumb, .scroll-up, .scroll-down { position: absolute; right: 0; width: 4px; }
.scroll-thumb { top: 801px; height: 100px; background: #444545; border-radius: 2px 0 0 2px; }
.scroll-up { top: 5px; border-bottom: 5px solid #5a5b5b; border-left: 4px solid transparent; }
.scroll-down { top: 907px; border-top: 5px solid #5a5b5b; border-left: 4px solid transparent; }
```
